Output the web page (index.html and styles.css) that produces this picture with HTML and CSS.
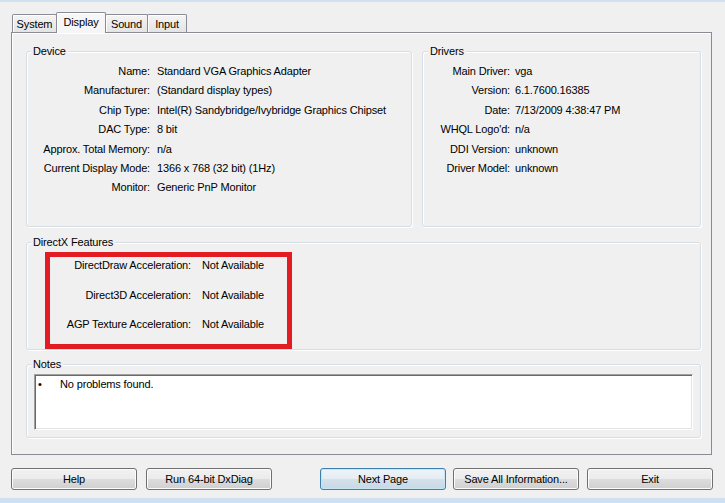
FILE: index.html
```html
<!DOCTYPE html>
<html>
<head>
<meta charset="utf-8">
<title>DirectX Diagnostic Tool - Display</title>
<link rel="stylesheet" href="styles.css">
</head>
<body>
<div class="topline"></div>
<div class="tabs">
  <div class="tab t-system">System</div>
  <div class="tab t-display active">Display</div>
  <div class="tab t-sound">Sound</div>
  <div class="tab t-input">Input</div>
</div>
<div class="panel">
  <div class="toprow">
    <div class="group device">
      <div class="legend">Device</div>
      <dl class="kv">
        <dt>Name:</dt><dd>Standard VGA Graphics Adapter</dd>
        <dt>Manufacturer:</dt><dd>(Standard display types)</dd>
        <dt>Chip Type:</dt><dd>Intel(R) Sandybridge/Ivybridge Graphics Chipset</dd>
        <dt>DAC Type:</dt><dd>8 bit</dd>
        <dt>Approx. Total Memory:</dt><dd>n/a</dd>
        <dt>Current Display Mode:</dt><dd>1366 x 768 (32 bit) (1Hz)</dd>
        <dt>Monitor:</dt><dd>Generic PnP Monitor</dd>
      </dl>
    </div>
    <div class="group drivers">
      <div class="legend">Drivers</div>
      <dl class="kv">
        <dt>Main Driver:</dt><dd>vga</dd>
        <dt>Version:</dt><dd>6.1.7600.16385</dd>
        <dt>Date:</dt><dd>7/13/2009 4:38:47 PM</dd>
        <dt>WHQL Logo'd:</dt><dd>n/a</dd>
        <dt>DDI Version:</dt><dd>unknown</dd>
        <dt>Driver Model:</dt><dd>unknown</dd>
      </dl>
    </div>
  </div>
  <div class="group dx">
    <div class="legend">DirectX Features</div>
    <dl class="kv">
      <dt>DirectDraw Acceleration:</dt><dd>Not Available</dd>
      <dt>Direct3D Acceleration:</dt><dd>Not Available</dd>
      <dt>AGP Texture Acceleration:</dt><dd>Not Available</dd>
    </dl>
    <div class="highlight"></div>
  </div>
  <div class="group notes">
    <div class="legend">Notes</div>
    <div class="notebox"><span class="bullet">•</span><span>No problems found.</span></div>
  </div>
</div>
<div class="buttons">
  <button class="btn">Help</button>
  <button class="btn b-run">Run 64-bit DxDiag</button>
  <button class="btn b-next default">Next Page</button>
  <button class="btn b-save">Save All Information...</button>
  <button class="btn b-exit">Exit</button>
</div>
<div class="bottomline"></div>
</body>
</html>
```
FILE: styles.css
```css
html, body {
  margin: 0;
  padding: 0;
}
body {
  width: 725px;
  height: 503px;
  overflow: hidden;
  background: #f0f0f0;
  color: #000;
  font-family: "Liberation Sans", Arial, sans-serif;
  font-size: 11px;
  line-height: 13px;
  letter-spacing: -0.15px;
}
.topline {
  height: 2px;
  background: #d2e1f1;
}
.tabs {
  display: flex;
  align-items: flex-end;
  height: 20px;
  margin-top: 10px;
  padding-left: 12px;
  position: relative;
  z-index: 1;
}
.tab {
  box-sizing: border-box;
  height: 18px;
  margin-left: -1px;
  border: 1px solid #898c95;
  border-bottom: none;
  border-radius: 2px 2px 0 0;
  background: linear-gradient(#f4f4f4, #e4e4e4);
  box-shadow: inset 1px 1px 0 #fff;
  display: flex;
  align-items: center;
  justify-content: center;
  padding-top: 1px;
}
.tab:first-child { margin-left: 0; }
.tab.active {
  height: 21px;
  margin-bottom: -1px;
  background: #f6f6f6;
  padding-top: 0;
  padding-bottom: 2px;
}
.t-system { width: 45px; }
.t-display { width: 50px; }
.t-sound { width: 43px; }
.t-input { width: 40px; }

.panel {
  box-sizing: border-box;
  width: 701px;
  height: 423px;
  margin-left: 11px;
  border: 1px solid #898c95;
  box-shadow: inset 1px 1px 0 #fff;
  background: #f0f0f0;
  padding: 18px 10px 0 14px;
}
.toprow {
  display: flex;
  gap: 10px;
}
.group {
  box-sizing: border-box;
  border: 1px solid #d5dfe5;
  border-radius: 3px;
  box-shadow: 1px 1px 0 #fff, inset 1px 1px 0 #fff;
}
.legend {
  display: table;
  margin: -7px 0 0 4px;
  padding: 0 2px;
  background: #f0f0f0;
  line-height: 13px;
}
.drivers .legend { margin-left: 5px; }
.device { width: 386px; height: 176px; }
.drivers { flex: 1; height: 176px; }
.dx {
  position: relative;
  height: 108px;
  margin-top: 15px;
}
.notes {
  height: 74px;
  margin-top: 14px;
}
.kv {
  display: grid;
  margin: 4px 0 0;
  line-height: 19.4px;
  white-space: nowrap;
}
.kv dt { text-align: right; }
.kv dd { margin: 0; }
.device .kv { grid-template-columns: 123px 1fr; column-gap: 7px; }
.drivers .kv { grid-template-columns: 87px 1fr; column-gap: 5px; }
.dx .kv {
  grid-template-columns: 164px 1fr;
  column-gap: 11px;
  row-gap: 10px;
  line-height: 19.5px;
  margin-top: 7px;
}
.highlight {
  position: absolute;
  left: 18px;
  top: 9px;
  width: 247px;
  height: 97px;
  box-sizing: border-box;
  border: 5px solid #e31b23;
}
.notebox {
  box-sizing: border-box;
  height: 56px;
  margin: 3px 7px 0;
  background: #fff;
  border: 1px solid;
  border-color: #a0a0a0 #fff #fff #a0a0a0;
  box-shadow: inset 1px 1px 0 #696969, inset -1px -1px 0 #e3e3e3;
  padding: 3px 0 0 3px;
  display: flex;
  align-items: flex-start;
}
.bullet { width: 22px; }

.buttons {
  display: flex;
  height: 22px;
  margin: 13px 0 0 11px;
}
.btn {
  box-sizing: border-box;
  width: 126px;
  height: 22px;
  padding: 0;
  margin: 0;
  font: inherit;
  letter-spacing: inherit;
  color: #000;
  border: 1px solid #707070;
  border-radius: 3px;
  background: linear-gradient(#f2f2f2 0%, #ebebeb 50%, #dddddd 50%, #cfcfcf 100%);
  box-shadow: inset 0 0 0 1px #fcfcfc;
}
.b-run { margin-left: 9px; }
.b-next { margin-left: 48px; }
.b-save { margin-left: 7px; }
.b-exit { margin-left: 8px; }
.btn.default {
  border-color: #3c7fb1;
  background: linear-gradient(#eef4f8 0%, #e4edf3 50%, #d4e1ea 50%, #c9d8e3 100%);
  box-shadow: inset 0 0 0 1px #c6e6f7;
}
.bottomline {
  height: 5px;
  margin-top: 8px;
  background: #cfe0f2;
}
```
